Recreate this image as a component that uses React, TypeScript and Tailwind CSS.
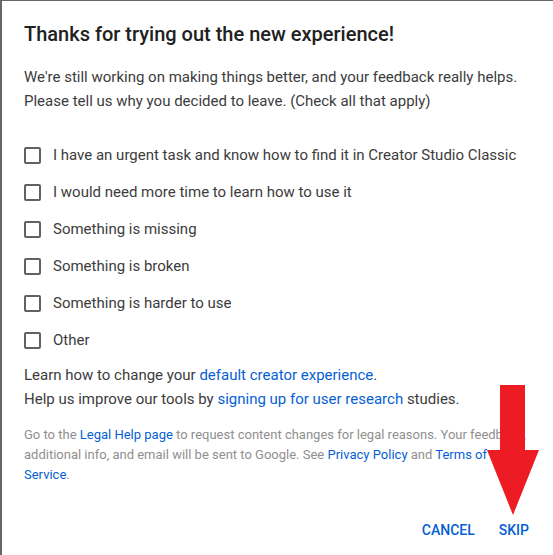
import React from "react";

const reasons = [
  "I have an urgent task and know how to find it in Creator Studio Classic",
  "I would need more time to learn how to use it",
  "Something is missing",
  "Something is broken",
  "Something is harder to use",
  "Other",
];

export default function App() {
  return (
    <div
      className="relative w-[553px] h-[555px] overflow-hidden bg-white"
      style={{ fontFamily: "Roboto, 'Noto Sans', Arial, sans-serif" }}
    >
      <div className="h-full border-t border-l-2 border-[#666] pl-[22px] pr-[24px] pt-[19px] flex flex-col">
        <h1 className="text-[20px] leading-[28px] font-medium text-[#212121]">
          Thanks for trying out the new experience!
        </h1>
        <p className="mt-[17px] text-[15px] leading-[24px] text-[#3c3c3c]">
          We're still working on making things better, and your feedback really helps.
          <br />
          Please tell us why you decided to leave. (Check all that apply)
        </p>
        <div className="mt-[24px] flex flex-col">
          {reasons.map((r) => (
            <label key={r} className="flex items-center h-[37px] gap-[12px]">
              <span className="w-[17px] h-[17px] border-2 border-[#616161] rounded-[2px] shrink-0" />
              <span className="text-[15px] text-[#3c3c3c] whitespace-nowrap">{r}</span>
            </label>
          ))}
        </div>
        <p className="mt-[4px] text-[15px] leading-[24px] text-[#3c3c3c]">
          Learn how to change your <a className="text-[#065fd4]">default creator experience</a>.
          <br />
          Help us improve our tools by <a className="text-[#065fd4]">signing up for user research</a> studies.
        </p>
        <p className="mt-[14px] text-[13px] leading-[20px] text-[#8f8f8f]">
          Go to the <a className="text-[#065fd4]">Legal Help page</a> to request content changes for legal reasons. Your feedback, additional info, and email will be sent to Google. See{" "}
          <a className="text-[#065fd4]">Privacy Policy</a> and <a className="text-[#065fd4]">Terms of Service</a>.
        </p>
        <div className="mt-[35px] flex justify-end gap-[24px] text-[14px] font-medium text-[#065fd4]">
          <button className="uppercase">Cancel</button>
          <button className="uppercase">Skip</button>
        </div>
      </div>
      <svg className="absolute left-[486px] top-[385px]" width="54" height="131" viewBox="0 0 54 131">
        <polygon points="14,0 39,0 39,65 53,65 27,130 1,65 14,65" fill="#ed1c24" />
      </svg>
    </div>
  );
}
